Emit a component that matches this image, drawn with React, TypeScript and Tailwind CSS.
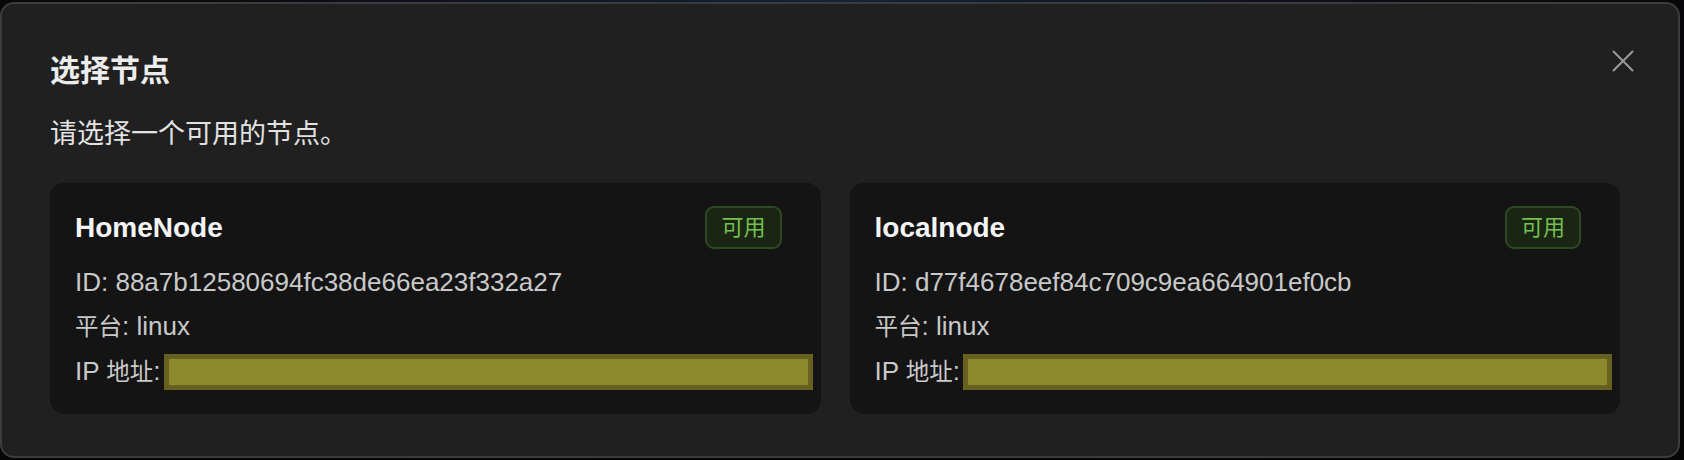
interface NodeInfo {
  name: string;
  id: string;
  platform: string;
}

const NODES: NodeInfo[] = [
  { name: "HomeNode", id: "88a7b12580694fc38de66ea23f332a27", platform: "linux" },
  { name: "localnode", id: "d77f4678eef84c709c9ea664901ef0cb", platform: "linux" },
];

const FONT = {
  fontFamily: '"Liberation Sans", "Noto Sans CJK SC", sans-serif',
};

function NodeCard({ node }: { node: NodeInfo }) {
  return (
    <div className="rounded-[14px] bg-[#141414] pl-[25px] pr-[14px] pt-[23px] pb-[20px]">
      <div className="flex items-center justify-between pr-[25px]">
        <span className="text-[28px] leading-[36px] font-bold text-[#f4f4f4]">{node.name}</span>
        <span className="flex h-[43px] items-center rounded-[9px] border-2 border-[#2f4a22] bg-[#1a2514] px-[14px] text-[22px] text-[#74c14f]">
          可用
        </span>
      </div>
      <div className="mt-[11px] text-[26px] leading-[44px] text-[#c9c9c9]">
        <div>ID: {node.id}</div>
        <div>
          <span className="text-[23.5px]">平台</span>: {node.platform}
        </div>
        <div className="flex items-center whitespace-nowrap">
          <span className="shrink-0">
            IP <span className="text-[23.5px]">地址</span>:
          </span>
          <span className="ml-[3px] box-border h-[36px] w-[649px] shrink-0 border-[5px] border-[#67611f] bg-[#8c8a2c]" />
        </div>
      </div>
    </div>
  );
}

export default function App() {
  return (
    <div
      className="h-[460px] w-[1684px] overflow-hidden bg-[radial-gradient(ellipse_at_50%_0%,#16213a_0%,#0b0d14_45%,#050505_80%)]"
      style={FONT}
    >
      <div className="relative mt-[2px] h-[456px] w-[1680px] rounded-[14px] border-2 border-[#3c3c3c] bg-[#202020] pl-[48px] pr-[58px] pt-[49px]">
        <button
          type="button"
          className="absolute right-[44px] top-[46px] text-[#9a9a9a]"
          aria-label="关闭"
        >
          <svg width="22" height="22" viewBox="0 0 22 22" fill="none" stroke="currentColor" strokeWidth="2" strokeLinecap="round">
            <path d="M1.5 1.5 L20.5 20.5 M20.5 1.5 L1.5 20.5" />
          </svg>
        </button>
        <h2 className="text-[30px] leading-[36px] font-bold text-[#ececec]">选择节点</h2>
        <p className="mt-[27px] text-[27px] leading-[36px] text-[#e2e2e2]">请选择一个可用的节点。</p>
        <div className="mt-[31px] grid grid-cols-2 gap-[29px]">
          {NODES.map((n) => (
            <NodeCard key={n.id} node={n} />
          ))}
        </div>
      </div>
    </div>
  );
}
